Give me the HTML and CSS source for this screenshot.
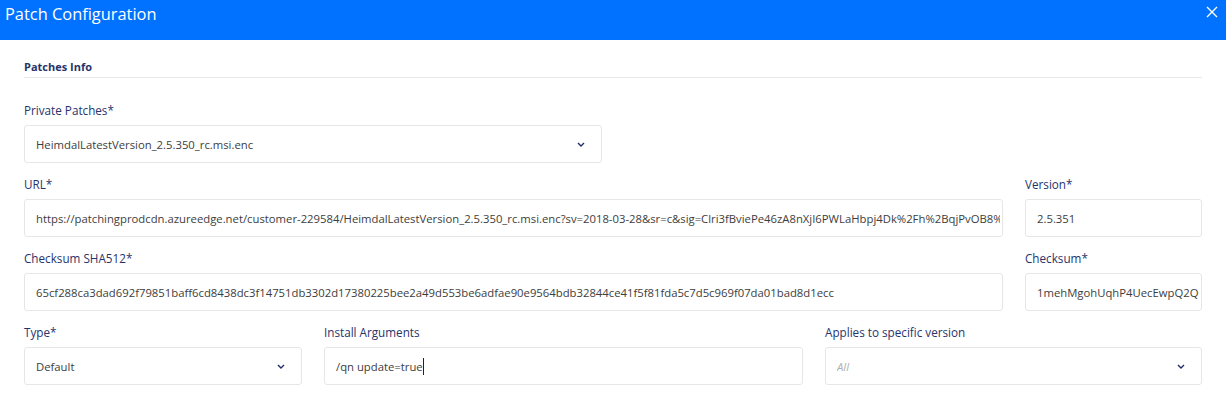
FILE: index.html
```html
<!DOCTYPE html>
<html lang="en">
<head>
    <meta charset="UTF-8">
    <meta name="viewport" content="width=device-width, initial-scale=1.0">
    <title>Patch Configuration</title>
    <link rel="stylesheet" href="styles.css">
</head>
<body>
    <div class="modal-header">
        <div class="modal-title">Patch Configuration</div>
        <svg class="close" width="12" height="12" viewBox="0 0 12 12">
            <path d="M1 1L11 11M11 1L1 11" stroke="#fff" stroke-width="1.4" fill="none"/>
        </svg>
    </div>

    <div class="modal-body">
        <div class="section-title">Patches Info</div>

        <div class="row row-half">
            <div class="field">
                <label>Private Patches*</label>
                <div class="control select">
                    <span class="value">HeimdalLatestVersion_2.5.350_rc.msi.enc</span>
                    <svg class="chevron" width="8" height="5" viewBox="0 0 8 5"><path d="M1 1L4 4L7 1" stroke="#1f2d6b" stroke-width="1.4" fill="none"/></svg>
                </div>
            </div>
        </div>

        <div class="row row-wide">
            <div class="field">
                <label>URL*</label>
                <div class="control"><span class="value">https://patchingprodcdn.azureedge.net/customer-229584/HeimdalLatestVersion_2.5.350_rc.msi.enc?sv=2018-03-28&amp;sr=c&amp;sig=Clri3fBviePe46zA8nXjI6PWLaHbpj4Dk%2Fh%2BqjPvOB8%3D&amp;se=2099</span></div>
            </div>
            <div class="field">
                <label>Version*</label>
                <div class="control"><span class="value">2.5.351</span></div>
            </div>
        </div>

        <div class="row row-wide">
            <div class="field">
                <label>Checksum SHA512*</label>
                <div class="control"><span class="value">65cf288ca3dad692f79851baff6cd8438dc3f14751db3302d17380225bee2a49d553be6adfae90e9564bdb32844ce41f5f81fda5c7d5c969f07da01bad8d1ecc</span></div>
            </div>
            <div class="field">
                <label>Checksum*</label>
                <div class="control"><span class="value">1mehMgohUqhP4UecEwpQ2Q==</span></div>
            </div>
        </div>

        <div class="row row-three">
            <div class="field">
                <label>Type*</label>
                <div class="control select">
                    <span class="value">Default</span>
                    <svg class="chevron" width="8" height="5" viewBox="0 0 8 5"><path d="M1 1L4 4L7 1" stroke="#1f2d6b" stroke-width="1.4" fill="none"/></svg>
                </div>
            </div>
            <div class="field">
                <label>Install Arguments</label>
                <div class="control"><span class="value caret">/qn update=true</span></div>
            </div>
            <div class="field">
                <label>Applies to specific version</label>
                <div class="control select">
                    <span class="value placeholder">All</span>
                    <svg class="chevron" width="8" height="5" viewBox="0 0 8 5"><path d="M1 1L4 4L7 1" stroke="#1f2d6b" stroke-width="1.4" fill="none"/></svg>
                </div>
            </div>
        </div>
    </div>
</body>
</html>
```

FILE: styles.css
```css
body {
    margin: 0;
    font-family: "Open Sans", "Noto Sans", sans-serif;
    background-color: #fff;
}
.modal-header {
    height: 40px;
    background-color: #0072ff;
    display: flex;
    justify-content: space-between;
    align-items: center;
    padding: 0 8px 0 5px;
}
.modal-title {
    color: #fff;
    font-size: 16.4px;
    margin-top: -14px;
}
.close {
    margin-top: -16px;
}
.modal-body {
    padding: 20px 24px 0;
}
.section-title {
    font-size: 11px;
    font-weight: 700;
    color: #27336b;
    line-height: 14px;
    padding-bottom: 3px;
    border-bottom: 1px solid #e8e8e8;
    margin-bottom: 25px;
}
.row {
    display: grid;
    column-gap: 22px;
    margin-bottom: 14px;
}
.row-half {
    grid-template-columns: 578px minmax(0, 1fr);
}
.row-wide {
    grid-template-columns: 979px minmax(0, 1fr);
}
.row-three {
    grid-template-columns: 278px 479px minmax(0, 1fr);
}
.field {
    min-width: 0;
}
.field label {
    display: block;
    font-size: 11.7px;
    line-height: 15px;
    color: #27336b;
    margin-bottom: 7px;
}
.control {
    height: 38px;
    box-sizing: border-box;
    border: 1px solid #e6e6e6;
    border-radius: 3px;
    display: flex;
    align-items: center;
    padding: 0 2px 0 11px;
    overflow: hidden;
}
.value {
    font-size: 11.3px;
    color: #3d3d3d;
    white-space: nowrap;
    overflow: hidden;
    flex: 1;
    min-width: 0;
}
.placeholder {
    color: #b0b0b0;
    font-style: italic;
}
.caret {
    flex: none;
    border-right: 1px solid #222;
    line-height: 17px;
}
.select {
    justify-content: space-between;
    padding-right: 11px;
}
.chevron {
    flex: none;
    margin-right: 5px;
}
```
